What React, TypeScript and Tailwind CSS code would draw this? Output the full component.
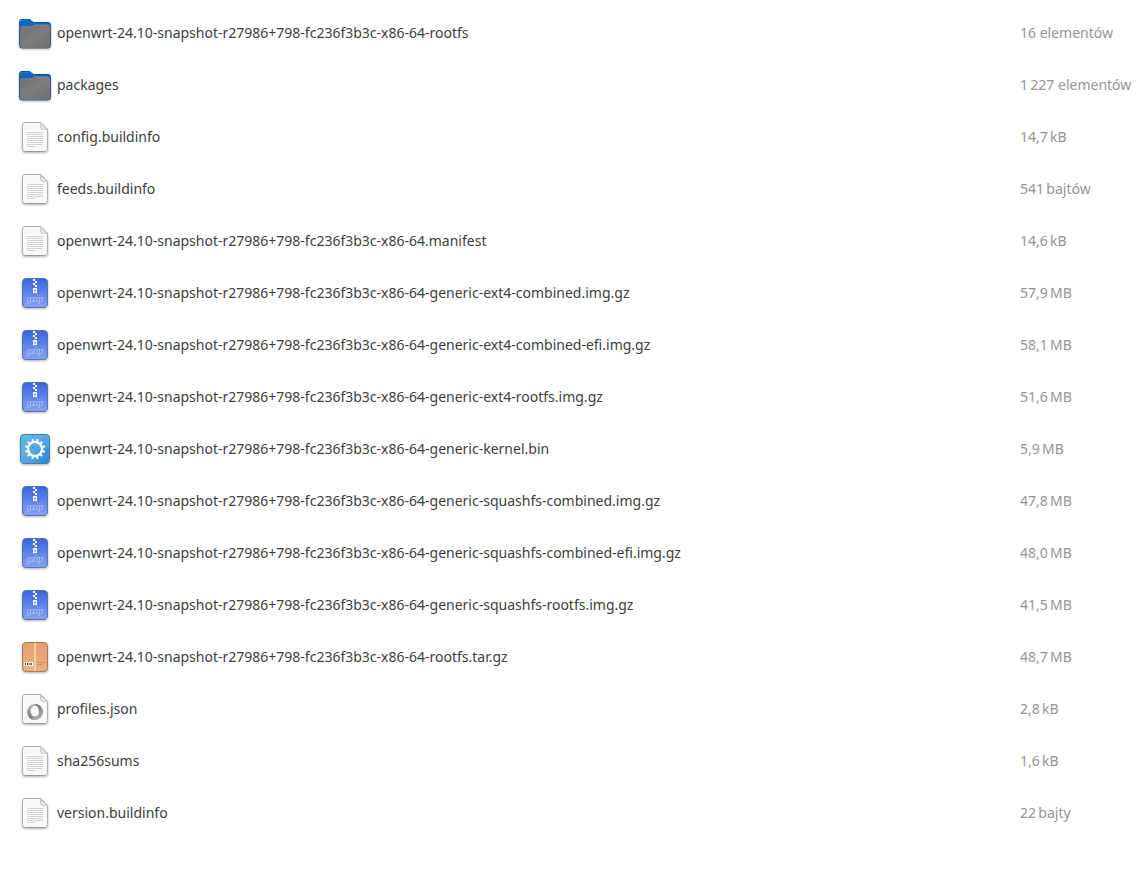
import React from "react";

type Kind = "folder" | "text" | "gzip" | "binary" | "archive" | "json";

const prefix = "openwrt-24.10-snapshot-r27986+798-fc236f3b3c-x86-64";

const files: { kind: Kind; name: string; size: string }[] = [
  { kind: "folder", name: `${prefix}-rootfs`, size: "16 elementów" },
  { kind: "folder", name: "packages", size: "1\u2009227 elementów" },
  { kind: "text", name: "config.buildinfo", size: "14,7\u2009kB" },
  { kind: "text", name: "feeds.buildinfo", size: "541\u2009bajtów" },
  { kind: "text", name: `${prefix}.manifest`, size: "14,6\u2009kB" },
  { kind: "gzip", name: `${prefix}-generic-ext4-combined.img.gz`, size: "57,9\u2009MB" },
  { kind: "gzip", name: `${prefix}-generic-ext4-combined-efi.img.gz`, size: "58,1\u2009MB" },
  { kind: "gzip", name: `${prefix}-generic-ext4-rootfs.img.gz`, size: "51,6\u2009MB" },
  { kind: "binary", name: `${prefix}-generic-kernel.bin`, size: "5,9\u2009MB" },
  { kind: "gzip", name: `${prefix}-generic-squashfs-combined.img.gz`, size: "47,8\u2009MB" },
  { kind: "gzip", name: `${prefix}-generic-squashfs-combined-efi.img.gz`, size: "48,0\u2009MB" },
  { kind: "gzip", name: `${prefix}-generic-squashfs-rootfs.img.gz`, size: "41,5\u2009MB" },
  { kind: "archive", name: `${prefix}-rootfs.tar.gz`, size: "48,7\u2009MB" },
  { kind: "json", name: "profiles.json", size: "2,8\u2009kB" },
  { kind: "text", name: "sha256sums", size: "1,6\u2009kB" },
  { kind: "text", name: "version.buildinfo", size: "22\u2009bajty" },
];

function Gradients() {
  return (
    <svg width="0" height="0" className="absolute" aria-hidden="true">
      <defs>
        <linearGradient id="folder-front" x1="0" y1="0" x2="1" y2="1">
          <stop offset="0" stopColor="#6e6e6e" />
          <stop offset="0.5" stopColor="#7d7d7d" />
          <stop offset="1" stopColor="#6e6e6e" />
        </linearGradient>
        <linearGradient id="gzip-body" x1="0" y1="0" x2="0" y2="1">
          <stop offset="0" stopColor="#3764e2" />
          <stop offset="1" stopColor="#86a2f2" />
        </linearGradient>
        <linearGradient id="gear-body" x1="0" y1="0" x2="1" y2="1">
          <stop offset="0" stopColor="#68bdea" />
          <stop offset="1" stopColor="#2b88d6" />
        </linearGradient>
        <linearGradient id="box-body" x1="0" y1="0" x2="0" y2="1">
          <stop offset="0" stopColor="#e5a070" />
          <stop offset="1" stopColor="#f2ad80" />
        </linearGradient>
        <linearGradient id="ring-dark" x1="0.3" y1="0" x2="0.7" y2="1">
          <stop offset="0" stopColor="#b8b8b8" />
          <stop offset="1" stopColor="#626262" />
        </linearGradient>
        <linearGradient id="ring-light" x1="0.3" y1="0" x2="0.7" y2="1">
          <stop offset="0" stopColor="#666666" />
          <stop offset="1" stopColor="#b4b4b4" />
        </linearGradient>
      </defs>
    </svg>
  );
}

function Folder() {
  return (
    <>
      <path d="M3 1.500h7q1.200 0 2 .9l1.200 1.200q.7.900 2 .9H29q2.500 0 2.500 2.500V18H.5V4Q.5 1.500 3 1.500z" fill="#0968c4" stroke="#17508a" />
      <path d="M1.500 6V4Q1.500 2.500 3 2.500h7" fill="none" stroke="#1c7fdc" strokeWidth="0.8" />
      <path d="M3 8.500h8.500q1.200 0 2-.7l.5-.4q.8-.7 2-.7H29q2 0 2 2V27q0 2.500-2.500 2.500H3Q.5 29.500.5 27V10.500Q.5 8.500 3 8.500z" fill="url(#folder-front)" />
      <path d="M.5 7v20.500q0 2.500 2.500 2.500h26q2.500 0 2.500-2.500V7" fill="none" stroke="#42566b" />
      <path d="M2 8.800h9.800q1.300 0 2.200-.8l.5-.4q.8-.6 1.800-.6H30" fill="none" stroke="#8f8f8f" strokeWidth="0.700" />
    </>
  );
}

function Paper() {
  return (
    <>
      <path d="M6 .5H21.500l7 7V26.500q0 3-3 3H6.500q-3 0-3-3V3.500Q3.500.5 6 .5z" fill="#f8f8f8" stroke="#b0b0b0" />
      <path d="M21.500 1V5q0 2.500 2.500 2.500h4z" fill="#e6e6e6" stroke="#bdbdbd" strokeWidth="0.700" />
      <path d="M6 29.500h20" stroke="#989898" />
    </>
  );
}

function Gzip() {
  return (
    <>
      <rect x="3.500" y="0.500" width="25" height="29" rx="3.500" fill="url(#gzip-body)" stroke="#5e73a8" />
      <path d="M16 1v28.500M4 16h24" stroke="#7898f0" strokeOpacity="0.200" />
      <path d="M14 1h2v2h-2zM16 3h2v2h-2zM14 5h2v2h-2zM16 7h2v2h-2z" fill="#fff" />
      <path d="M14 10h4v5h-4zM15.200 11.700v1.800h1.600v-1.800z" fill="#fff" fillRule="evenodd" />
      <text x="16" y="24" textAnchor="middle" fill="#b3c5fa" className="font-['Liberation_Serif',serif] text-[10px] italic">
        gzip
      </text>
    </>
  );
}

const teeth = Array.from({ length: 12 }, (_, i) => i * 30 + 15);

function Gear() {
  return (
    <>
      <rect x="1.500" y="0.500" width="29" height="29" rx="3.500" fill="url(#gear-body)" stroke="#4a7f9f" />
      <path d="M2 15h14V1h12q2 0 2 2v12H16v14H4q-2 0-2-2z" fill="#9ad8f8" fillOpacity="0.150" />
      <circle cx="16" cy="15" r="7" fill="none" stroke="#fff" strokeWidth="2.200" />
      {teeth.map((a) => (
        <path key={a} d="M14.700 7.500l.5-2.800h1.600l.5 2.800z" fill="#fff" transform={`rotate(${a} 16 15)`} />
      ))}
    </>
  );
}

function Archive() {
  return (
    <>
      <rect x="3.500" y="0.500" width="25" height="29" rx="3.500" fill="url(#box-body)" stroke="#a37d62" />
      <path d="M15 1h2v28h-2z" fill="#f8cf9c" />
      <path d="M5 20h9v4H5z" fill="#fff" />
      <path d="M6 21h1v2H6zM8 21h1.500v2H8zM10.500 21h1v2h-1zM12 21h1v2h-1z" fill="#444" />
      <path d="M18 20.500h9M18 22.500h5" stroke="#d28b5a" />
    </>
  );
}

function FileIcon({ kind }: { kind: Kind }) {
  return (
    <svg
      viewBox="0 0 32 32"
      aria-hidden="true"
      className="block size-8 shrink-0 overflow-visible drop-shadow-[0_1px_1px_rgba(0,0,0,0.3)]"
    >
      {kind === "folder" && <Folder />}
      {kind === "text" && (
        <>
          <Paper />
          <path d="M8 10.500h16M8 12.500h16M8 14.500h16M8 16.500h16M8 18.500h16M8 20.500h16M8 22.500h16M8 24.500h8" stroke="#d2d2d2" />
        </>
      )}
      {kind === "json" && (
        <>
          <Paper />
          <path d="M16 26A8 8 0 0 1 16 10C18.500 10 20 12 20 14.500A4.200 4.200 0 0 0 12 18C12 21 14 25 16 26z" fill="url(#ring-dark)" />
          <path d="M16 10A8 8 0 0 1 16 26C13.500 26 12 24 12 20A4.200 4.200 0 0 0 20 18C20 14 18 11 16 10z" fill="url(#ring-light)" />
        </>
      )}
      {kind === "gzip" && <Gzip />}
      {kind === "binary" && <Gear />}
      {kind === "archive" && <Archive />}
    </svg>
  );
}

export default function App() {
  return (
    <main className="min-h-screen bg-white pt-2 pl-[19px] font-['Noto_Sans','Open_Sans',sans-serif] text-sm text-[#3d3d3d]">
      <Gradients />
      <table aria-label="Pliki" className="w-full border-collapse">
        <tbody>
          {files.map((file) => (
            <tr key={file.name} className="h-[52px]">
              <td className="p-0">
                <div className="flex items-center gap-1.5">
                  <FileIcon kind={file.kind} />
                  <span className="pb-0.5 whitespace-nowrap">{file.name}</span>
                </div>
              </td>
              <td className="w-[117px] p-0 pb-0.5 whitespace-nowrap text-[#949494]">{file.size}</td>
            </tr>
          ))}
        </tbody>
      </table>
    </main>
  );
}
